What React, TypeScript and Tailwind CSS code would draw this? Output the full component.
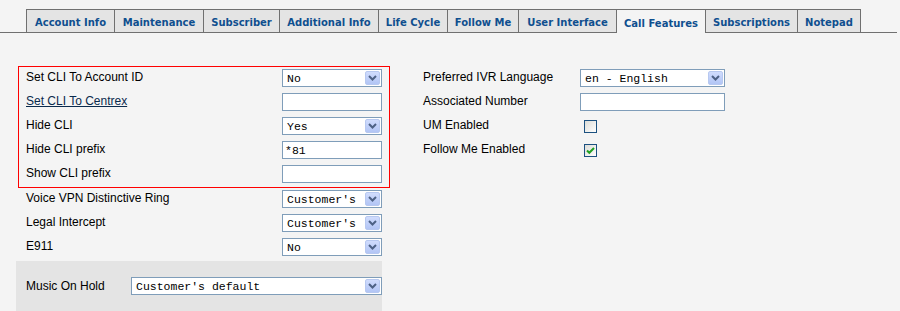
import React from "react";

const tabs: { name: string; w: string; active?: boolean; last?: boolean }[] = [
  { name: "Account Info", w: "w-[88px]" },
  { name: "Maintenance", w: "w-[89px]" },
  { name: "Subscriber", w: "w-[76px]" },
  { name: "Additional Info", w: "w-[99px]" },
  { name: "Life Cycle", w: "w-[69px]" },
  { name: "Follow Me", w: "w-[71px]" },
  { name: "User Interface", w: "w-[98px]" },
  { name: "Call Features", w: "w-[89px]", active: true },
  { name: "Subscriptions", w: "w-[92px]" },
  { name: "Notepad", w: "w-[64px]", last: true },
];

function Chevron() {
  return (
    <svg width="9" height="6" viewBox="0 0 9 6">
      <path d="M1 1 L4.5 4.5 L8 1" stroke="#4d6185" strokeWidth="2" fill="none" />
    </svg>
  );
}

function Select({ value, w }: { value: string; w: string }) {
  return (
    <div className={`flex h-[18px] items-stretch border border-[#7f9db9] bg-white ${w}`}>
      <div className="flex flex-1 items-center overflow-hidden whitespace-nowrap pl-[4px] pt-px font-['Liberation_Mono',monospace] text-[11.5px] leading-none text-black">
        {value}
      </div>
      <div className="m-px flex w-[15px] items-center justify-center rounded-[2px] border border-[#b7c8f0] bg-linear-to-b from-[#d0dcfd] to-[#b2c5f5]">
        <Chevron />
      </div>
    </div>
  );
}

function Input({ value, w }: { value?: string; w: string }) {
  return (
    <div
      className={`flex h-[18px] items-center border border-[#7f9db9] bg-white pl-[2px] pt-px font-['Liberation_Mono',monospace] text-[11.5px] leading-none text-black ${w}`}
    >
      {value}
    </div>
  );
}

function Checkbox({ checked }: { checked?: boolean }) {
  return (
    <div className="ml-[4px] mt-[5px] flex h-[13px] w-[13px] items-center justify-center border border-[#1c5180] bg-linear-to-br from-[#dcdcd7] to-white">
      {checked && (
        <svg width="11" height="11" viewBox="0 0 11 11">
          <path d="M2 5.5 L4.3 7.8 L9 3" stroke="#21a121" strokeWidth="2" fill="none" />
        </svg>
      )}
    </div>
  );
}

function Row({ label, link, children }: { label: string; link?: boolean; children: React.ReactNode }) {
  return (
    <div className="flex h-[24px] items-start justify-between">
      <div
        className={`pt-[3px] text-[12px] leading-[14px] ${link ? "text-[#0a2a4d] underline" : "text-black"}`}
      >
        {label}
      </div>
      <div className="mt-[2px]">{children}</div>
    </div>
  );
}

function RRow({ label, children }: { label: string; children: React.ReactNode }) {
  return (
    <div className="flex h-[24px] items-start">
      <div className="w-[157px] pt-[3px] text-[12px] leading-[14px] text-black">{label}</div>
      <div className="mt-[2px]">{children}</div>
    </div>
  );
}

export default function App() {
  return (
    <div className="h-[311px] w-[900px] overflow-hidden bg-[#f4f4f4] font-['Liberation_Sans',Arial,sans-serif]">
      <div className="flex w-[897px] items-end border-b border-[#707070] pl-[26px] pt-[9px]">
        {tabs.map((t) => (
          <div
            key={t.name}
            className={`flex items-center justify-center border-l border-t border-[#707070] pt-[3px] font-['DejaVu_Sans',sans-serif] text-[10px] font-bold text-[#0f4f8f] ${t.w} ${
              t.last ? "border-r" : ""
            } ${t.active ? "-mb-px h-[24px] bg-[#f4f4f4]" : "h-[23px] bg-[#e4e4e4]"}`}
          >
            {t.name}
          </div>
        ))}
      </div>

      <div className="mt-[33px] flex">
        <div className="ml-[18px] w-[372px]">
          <div className="border border-[#ff0000] px-[7px]">
            <Row label="Set CLI To Account ID">
              <Select value="No" w="w-[100px]" />
            </Row>
            <Row label="Set CLI To Centrex" link>
              <Input w="w-[100px]" />
            </Row>
            <Row label="Hide CLI">
              <Select value="Yes" w="w-[100px]" />
            </Row>
            <Row label="Hide CLI prefix">
              <Input value="*81" w="w-[100px]" />
            </Row>
            <Row label="Show CLI prefix">
              <Input w="w-[100px]" />
            </Row>
          </div>
          <div className="pl-[8px] pr-[8px]">
            <Row label="Voice VPN Distinctive Ring">
              <Select value="Customer's" w="w-[100px]" />
            </Row>
            <Row label="Legal Intercept">
              <Select value="Customer's" w="w-[100px]" />
            </Row>
            <Row label="E911">
              <Select value="No" w="w-[100px]" />
            </Row>
          </div>
          <div className="ml-[-2px] mt-[1px] h-[60px] w-[366px] bg-[#e4e4e4] pl-[10px] pt-[16px]">
            <div className="flex items-start justify-between">
              <div className="pt-[2px] text-[12px] leading-[14px] text-black">Music On Hold</div>
              <Select value="Customer's default" w="w-[251px]" />
            </div>
          </div>
        </div>

        <div className="ml-[33px] mt-[1px]">
          <RRow label="Preferred IVR Language">
            <Select value="en - English" w="w-[145px]" />
          </RRow>
          <RRow label="Associated Number">
            <Input w="w-[145px]" />
          </RRow>
          <div className="flex h-[24px] items-start">
            <div className="w-[157px] pt-[3px] text-[12px] leading-[14px] text-black">UM Enabled</div>
            <Checkbox />
          </div>
          <div className="flex h-[24px] items-start">
            <div className="w-[157px] pt-[3px] text-[12px] leading-[14px] text-black">Follow Me Enabled</div>
            <Checkbox checked />
          </div>
        </div>
      </div>
    </div>
  );
}
